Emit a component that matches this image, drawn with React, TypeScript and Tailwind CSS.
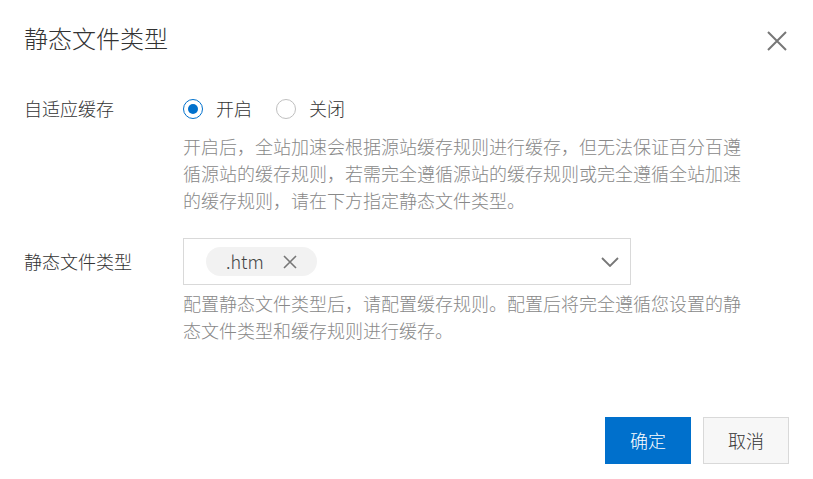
import React, { useState } from 'react';

function Radio({ checked, label, onClick }: { checked: boolean; label: string; onClick: () => void }) {
  return (
    <label className="flex items-center gap-[13px] cursor-pointer" onClick={onClick}>
      <span
        className={
          checked
            ? 'w-5 h-5 rounded-full border-[1.5px] border-[#0070cc] flex items-center justify-center'
            : 'w-5 h-5 rounded-full border border-[#bfbfbf] flex items-center justify-center'
        }
      >
        {checked && <span className="w-[10px] h-[10px] rounded-full bg-[#0070cc]" />}
      </span>
      <span className="text-[#333]">{label}</span>
    </label>
  );
}

export default function App() {
  const [adaptive, setAdaptive] = useState(true);
  const [types, setTypes] = useState<string[]>(['.htm']);

  return (
    <div
      className="w-[813px] h-[479px] bg-white flex flex-col text-[18px] leading-[27px] font-light"
      style={{ fontFamily: '"Noto Sans CJK SC", "Noto Sans", "Liberation Sans", sans-serif' }}
    >
      {/* Header */}
      <div className="flex items-start justify-between pl-6 pr-[26px] pt-[22px]">
        <h2 className="text-[24px] leading-[32px] text-[#333] font-light">静态文件类型</h2>
        <button className="mt-[9px] text-[#777]">
          <svg width="20" height="20" viewBox="0 0 20 20" fill="none" stroke="currentColor" strokeWidth="2">
            <path d="M1 1 L19 19 M19 1 L1 19" />
          </svg>
        </button>
      </div>

      {/* Body */}
      <div className="px-6 mt-[41px] grid grid-cols-[159px_1fr] gap-y-6">
        <div className="text-[#333]">自适应缓存</div>
        <div>
          <div className="flex items-center gap-6 h-[27px]">
            <Radio checked={adaptive} label="开启" onClick={() => setAdaptive(true)} />
            <Radio checked={!adaptive} label="关闭" onClick={() => setAdaptive(false)} />
          </div>
          <p className="mt-[11px] w-[562px] text-[#888]">
            开启后，全站加速会根据源站缓存规则进行缓存，但无法保证百分百遵循源站的缓存规则，若需完全遵循源站的缓存规则或完全遵循全站加速的缓存规则，请在下方指定静态文件类型。
          </p>
        </div>

        <div className="text-[#333] pt-[10px]">静态文件类型</div>
        <div>
          <div className="w-[448px] h-[47px] border border-[#d9d9d9] flex items-center justify-between pl-[22px] pr-[11px]">
            <div className="flex items-center gap-2">
              {types.map(t => (
                <span key={t} className="h-[29px] rounded-full bg-[#f2f2f2] flex items-center pl-5 pr-[20px] gap-[19px] text-[#444]">
                  {t}
                  <button className="text-[#777]" onClick={() => setTypes(types.filter(x => x !== t))}>
                    <svg width="14" height="14" viewBox="0 0 14 14" fill="none" stroke="currentColor" strokeWidth="1.6">
                      <path d="M1 1 L13 13 M13 1 L1 13" />
                    </svg>
                  </button>
                </span>
              ))}
            </div>
            <svg width="18" height="10" viewBox="0 0 18 10" fill="none" stroke="#777" strokeWidth="1.8">
              <path d="M1 1 L9 9 L17 1" />
            </svg>
          </div>
          <p className="mt-[5px] w-[562px] text-[#888]">
            配置静态文件类型后，请配置缓存规则。配置后将完全遵循您设置的静态文件类型和缓存规则进行缓存。
          </p>
        </div>
      </div>

      {/* Footer */}
      <div className="mt-auto flex justify-end gap-3 px-6 pb-[15px]">
        <button className="w-[86px] h-[47px] bg-[#0070cc] text-white">确定</button>
        <button className="w-[86px] h-[47px] bg-[#f7f7f7] border border-[#d9d9d9] text-[#333]">取消</button>
      </div>
    </div>
  );
}
